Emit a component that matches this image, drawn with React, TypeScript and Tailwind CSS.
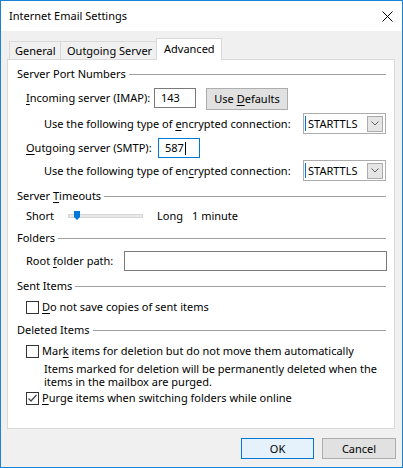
import type { ReactNode } from "react";

function Header({ children }: { children: ReactNode }) {
  return (
    <div className="flex items-center h-[16px] pl-[9px] pr-[8px]">
      <span className="whitespace-nowrap">{children}</span>
      <div className="flex-1 h-px bg-[#a0a0a0] ml-[3px]" />
    </div>
  );
}

function Dropdown() {
  return (
    <div className="flex items-center w-[83px] h-[21px] border border-[#acacac] bg-white">
      <div className="w-px h-[15px] bg-[#0078d7] ml-[1px]" />
      <span className="flex-1 pl-[2px]">STARTTLS</span>
      <div className="flex items-center justify-center w-[16px] h-[16px] mr-[2px] bg-[#e5e5e5] border border-[#acacac]">
        <svg width="8" height="5" viewBox="0 0 8 5">
          <polyline points="0.5,0.5 4,4 7.5,0.5" fill="none" stroke="#606060" strokeWidth="1" />
        </svg>
      </div>
    </div>
  );
}

function Checkbox({ checked, children }: { checked?: boolean; children: ReactNode }) {
  return (
    <div className="flex items-center h-[16px] pl-[18px]">
      <div className="w-[13px] h-[13px] border border-[#333333] bg-white flex items-center justify-center">
        {checked && (
          <svg width="11" height="11" viewBox="0 0 11 11">
            <polyline points="1.5,5.5 4,8 9.5,2" fill="none" stroke="#444444" strokeWidth="1.3" />
          </svg>
        )}
      </div>
      <span className="ml-[3px] whitespace-nowrap">{children}</span>
    </div>
  );
}

export default function App() {
  return (
    <div
      className="w-[403px] h-[468px] border border-[#1883d7] bg-[#f0f0f0] flex flex-col text-black text-[11px] leading-[14px]"
      style={{ fontFamily: '"Noto Sans", "Liberation Sans", sans-serif' }}
    >
      {/* title bar */}
      <div className="h-[30px] bg-white flex items-center pl-[8px] pr-[9px]">
        <span className="flex-1 text-[11px]">Internet Email Settings</span>
        <svg width="11" height="11" viewBox="0 0 11 11">
          <path d="M0.5 0.5 L10.5 10.5 M10.5 0.5 L0.5 10.5" stroke="#000" strokeWidth="1" />
        </svg>
      </div>

      {/* tabs */}
      <div className="flex items-end h-[21px] mt-[7px] pl-[8px]">
        <div className="w-[52px] h-[18px] border-t border-l border-r border-[#d9d9d9] flex items-center pl-[5px]">
          General
        </div>
        <div className="w-[96px] h-[18px] border-t border-r border-[#d9d9d9] flex items-center pl-[6px]">
          Outgoing Server
        </div>
        <div className="relative z-10 -ml-px -mb-px w-[66px] h-[22px] bg-white border-t border-l border-r border-[#d9d9d9] flex items-center pl-[7px] pb-[2px]">
          Advanced
        </div>
      </div>

      {/* panel */}
      <div className="ml-[6px] w-[388px] h-[370px] border border-[#d9d9d9] bg-white flex flex-col">
        <div className="mt-[6px]">
          <Header>Server Port Numbers</Header>
        </div>

        <div className="mt-[6px] flex items-start h-[22px] pl-[18px]">
          <div className="w-[128px] h-[20px] flex items-center">
            <span>
              <u className="underline-offset-2">I</u>ncoming server (IMAP):
            </span>
          </div>
          <div className="w-[42px] h-[20px] border border-[#7a7a7a] flex items-center pl-[6px]">143</div>
          <div className="ml-[10px] w-[82px] h-[22px] bg-[#e1e1e1] border border-[#adadad] flex items-center justify-center">
            <span>
              Use <u className="underline-offset-2">D</u>efaults
            </span>
          </div>
        </div>

        <div className="mt-[3px] flex items-center justify-between h-[21px] pl-[36px] pr-[8px]">
          <span>
            Use the following type of <u className="underline-offset-2">e</u>ncrypted connection:
          </span>
          <Dropdown />
        </div>

        <div className="mt-[4px] flex items-center h-[20px] pl-[18px]">
          <div className="w-[132px]">
            <u className="underline-offset-2">O</u>utgoing server (SMTP):
          </div>
          <div className="w-[42px] h-[20px] border border-[#0078d7] flex items-center pl-[6px]">
            587
            <div className="w-px h-[13px] bg-black ml-[1px]" />
          </div>
        </div>

        <div className="mt-[2px] flex items-center justify-between h-[21px] pl-[36px] pr-[8px]">
          <span>
            Use the following type of en<u className="underline-offset-2">c</u>rypted connection:
          </span>
          <Dropdown />
        </div>

        <div className="mt-[7px]">
          <Header>
            Server <u className="underline-offset-2">T</u>imeouts
          </Header>
        </div>

        <div className="mt-[4px] flex items-center h-[16px] pl-[18px]">
          <div className="w-[42px]">Short</div>
          <div className="relative w-[75px] h-[4px] bg-[#e7eaea] border border-[#d6d6d6]">
            <svg className="absolute left-[5px] -top-[4px]" width="6" height="9" viewBox="0 0 6 9">
              <path d="M0 0 H6 V6 L3 9 L0 6 Z" fill="#0078d7" />
            </svg>
          </div>
          <div className="ml-[14px] w-[35px]">Long</div>
          <div>1 minute</div>
        </div>

        <div className="mt-[6px]">
          <Header>Folders</Header>
        </div>

        <div className="mt-[5px] flex items-center h-[20px] pl-[18px] pr-[7px]">
          <div className="w-[98px]">
            Root <u className="underline-offset-2">f</u>older path:
          </div>
          <div className="flex-1 h-[20px] border border-[#7a7a7a]" />
        </div>

        <div className="mt-[7px]">
          <Header>Sent Items</Header>
        </div>

        <div className="mt-[5px]">
          <Checkbox>
            <u className="underline-offset-2">D</u>o not save copies of sent items
          </Checkbox>
        </div>

        <div className="mt-[7px]">
          <Header>Deleted Items</Header>
        </div>

        <div className="mt-[5px]">
          <Checkbox>
            Mar<u className="underline-offset-2">k</u> items for deletion but do not move them automatically
          </Checkbox>
        </div>

        <div className="mt-[3px] pl-[36px] leading-[13px] whitespace-nowrap">
          Items marked for deletion will be permanently deleted when the
          <br />
          items in the mailbox are purged.
        </div>

        <div className="mt-[2px]">
          <Checkbox checked>
            <u className="underline-offset-2">P</u>urge items when switching folders while online
          </Checkbox>
        </div>
      </div>

      {/* buttons */}
      <div className="mt-[9px] flex justify-end gap-[8px] pr-[6px]">
        <div className="w-[73px] h-[21px] bg-[#e5f1fb] border border-[#0078d7] flex items-center justify-center">OK</div>
        <div className="w-[74px] h-[21px] bg-[#e1e1e1] border border-[#adadad] flex items-center justify-center">
          Cancel
        </div>
      </div>
    </div>
  );
}
